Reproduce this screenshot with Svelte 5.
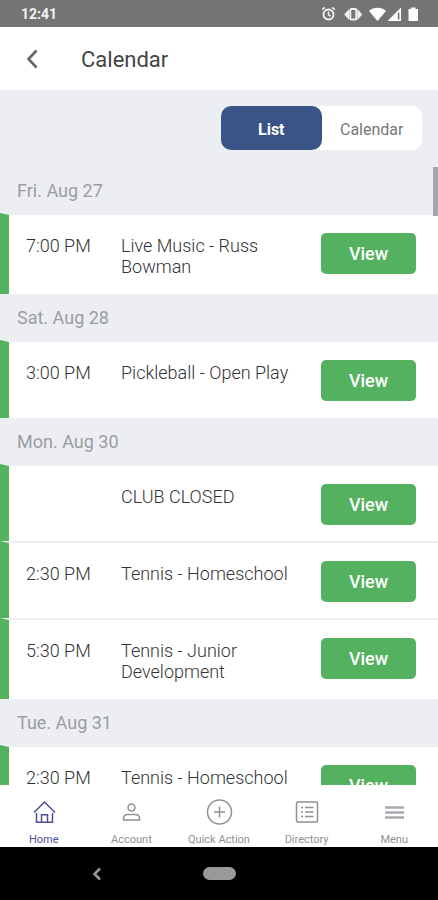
<script>
  const days = [
    { label: 'Fri. Aug 27', events: [{ time: '7:00 PM', title: 'Live Music - Russ Bowman' }] },
    { label: 'Sat. Aug 28', events: [{ time: '3:00 PM', title: 'Pickleball - Open Play' }] },
    {
      label: 'Mon. Aug 30',
      events: [
        { time: '', title: 'CLUB CLOSED' },
        { time: '2:30 PM', title: 'Tennis - Homeschool' },
        { time: '5:30 PM', title: 'Tennis - Junior Development' }
      ]
    },
    { label: 'Tue. Aug 31', events: [{ time: '2:30 PM', title: 'Tennis - Homeschool' }] }
  ];
  const tabs = ['Home', 'Account', 'Quick Action', 'Directory', 'Menu'];
  let view = $state('List');
</script>

<div class="app">
  <div class="status">
    <span>12:41</span>
    <svg width="98" height="18" viewBox="0 0 98 18" fill="none" stroke="#f1f1f1" aria-hidden="true">
      <circle cx="7.500" cy="9.500" r="5" stroke-width="1.900" />
      <path d="M7.500 6.500v3.300l2 1.400M1.200 4.600l2.600-2.200M13.800 4.600l-2.600-2.200" stroke-width="1.500" />
      <rect x="29.300" y="4" width="6" height="10.500" rx="1" stroke-width="2" />
      <path d="M27.500 5.500v8L24 9.500zM37 5.500v8l3.500-4z" fill="#f1f1f1" stroke-width="1.200" />
      <path d="M48 6C52.500 1.800 60.500 1.800 65 6L56.500 16z" fill="#fff" stroke="none" />
      <path d="M80 2.500V16H66.500z" fill="#fff" stroke="none" />
      <path d="M77.600 7.500v7" stroke="#747474" stroke-width="1.600" />
      <path d="M90 2.500h4.500V4H97v12h-9.500V4H90z" fill="#fff" stroke="none" />
    </svg>
  </div>

  <header>
    <button class="back" aria-label="Back">
      <svg width="14" height="20" viewBox="0 0 14 20" fill="none" stroke="#666" stroke-width="2.600"><path d="M10.500 1.500 2.500 10l8 8.500" /></svg>
    </button>
    <h1>Calendar</h1>
  </header>

  <main>
    <div class="toolbar">
      <div class="switch">
        {#each ['List', 'Calendar'] as name}
          <button class:active={view === name} aria-pressed={view === name} onclick={() => (view = name)}>{name}</button>
        {/each}
      </div>
    </div>
    {#each days as day}
      <section>
        <h2>{day.label}</h2>
        <ul>
          {#each day.events as event}
            <li>
              <span class="time">{event.time}</span>
              <span class="title">{event.title}</span>
              <button class="view">View</button>
            </li>
          {/each}
        </ul>
      </section>
    {/each}
    <div class="thumb"></div>
  </main>

  <nav>
    {#each tabs as tab, i}
      <a href="#{tab}" class:current={i === 0}>
        <svg width="28" height="28" viewBox="0 0 28 28" fill="none" stroke="currentColor" stroke-width="1.500" aria-hidden="true">
          {#if i === 0}
            <path d="M4 14.500 14.500 4 25 14.500M6.500 15v9.200h16V15M11.500 24v-7.200h6V24" />
          {:else if i === 1}
            <circle cx="14.500" cy="9.500" r="3.500" />
            <path d="M6.500 22v-1.500c0-2.500 2-4 4.500-4h7c2.500 0 4.500 1.500 4.500 4V22z" stroke-linejoin="round" />
          {:else if i === 2}
            <circle cx="14.500" cy="14" r="12" />
            <path d="M14.500 8.500v11M9 14h11" />
          {:else if i === 3}
            <rect x="3.500" y="4" width="21" height="20" rx="1.500" />
            <path d="M8 9.500h2M12 9.500h8.500M8 14h2M12 14h8.500M8 18.500h2M12 18.500h8.500" />
          {:else}
            <path d="M5 9.500h19M5 14.500h19M5 19.500h19" stroke="#a6a9b0" stroke-width="2.600" />
          {/if}
        </svg>
        <span>{tab}</span>
      </a>
    {/each}
  </nav>

  <div class="system">
    <button aria-label="System back">
      <svg width="18" height="14" viewBox="0 0 18 14" fill="none" stroke="#999" stroke-width="2.500"><path d="M8 1.500 2.500 7 8 12.500" /></svg>
    </button>
    <button class="pill" aria-label="System home"></button>
    <span></span>
  </div>
</div>

<style>
  :global(body) { margin: 0; }
  .app {
    display: flex;
    flex-direction: column;
    height: 100vh;
    overflow: hidden;
    background: #fff;
    color: #333;
    font-family: Roboto, 'Liberation Sans', sans-serif;
  }
  button {
    padding: 0;
    border: 0;
    background: none;
    font: inherit;
    color: inherit;
    cursor: pointer;
  }
  svg { display: block; }
  .status {
    display: flex;
    flex: none;
    align-items: center;
    justify-content: space-between;
    height: 27px;
    padding: 0 19px 0 21px;
    background: #747474;
    color: #f1f1f1;
    font-size: 14px;
    font-weight: 700;
  }
  header {
    display: flex;
    flex: none;
    align-items: center;
    gap: 40px;
    height: 63px;
    padding: 0 26px;
  }
  .back { padding: 0 1px 0 0; }
  h1 {
    margin: 0;
    padding-top: 2px;
    font-size: 22px;
    font-weight: 400;
    color: #444;
  }
  main {
    position: relative;
    flex: 1;
    min-height: 0;
    overflow: hidden;
    background: #eceef2;
  }
  .toolbar {
    display: flex;
    justify-content: flex-end;
    padding: 16px 16px 17px;
  }
  .switch {
    display: grid;
    grid-template-columns: 1fr 1fr;
    width: 201px;
    height: 44px;
    border-radius: 10px;
    background: #fff;
    font-size: 16px;
    color: #777;
  }
  .switch button {
    padding-top: 2px;
    border-radius: 10px;
  }
  .switch .active {
    background: #3a5488;
    color: #fff;
    font-weight: 700;
  }
  h2 {
    margin: 0;
    padding: 2px 0 0 17px;
    font-size: 18px;
    font-weight: 400;
    line-height: 44px;
    color: #9b9da2;
  }
  ul {
    margin: 0;
    padding: 0;
    list-style: none;
  }
  li {
    display: grid;
    grid-template-columns: 95px 1fr 95px;
    align-items: start;
    padding: 18px 22px 16px 17px;
    border-top: 2px solid #eceef2;
    border-left: 9px solid #53b15f;
    background: #fff;
    background-clip: padding-box;
    font-size: 18px;
    font-weight: 300;
    line-height: 21px;
  }
  li:last-child { padding-bottom: 17px; }
  .time, .title { padding-top: 2px; }
  .title { padding-right: 24px; }
  .view {
    height: 41px;
    border-radius: 5px;
    background: #53b15f;
    color: #fff;
    font-size: 18px;
    font-weight: 500;
  }
  .thumb {
    position: absolute;
    top: 77px;
    right: 0;
    width: 5px;
    height: 49px;
    background: #a5a6a9;
  }
  nav {
    display: grid;
    flex: none;
    grid-template-columns: repeat(5, 1fr);
    height: 62px;
  }
  nav a {
    display: flex;
    flex-direction: column;
    align-items: center;
    gap: 7px;
    padding-top: 13px;
    color: #8d9096;
    font-size: 11px;
    line-height: 13px;
    text-decoration: none;
  }
  nav .current { color: #4c5095; }
  .system {
    display: grid;
    flex: none;
    grid-template-columns: 1fr 33px 1fr;
    place-items: center;
    height: 53px;
    background: #000;
  }
  .pill {
    width: 33px;
    height: 13px;
    border-radius: 7px;
    background: #999;
  }
</style>
